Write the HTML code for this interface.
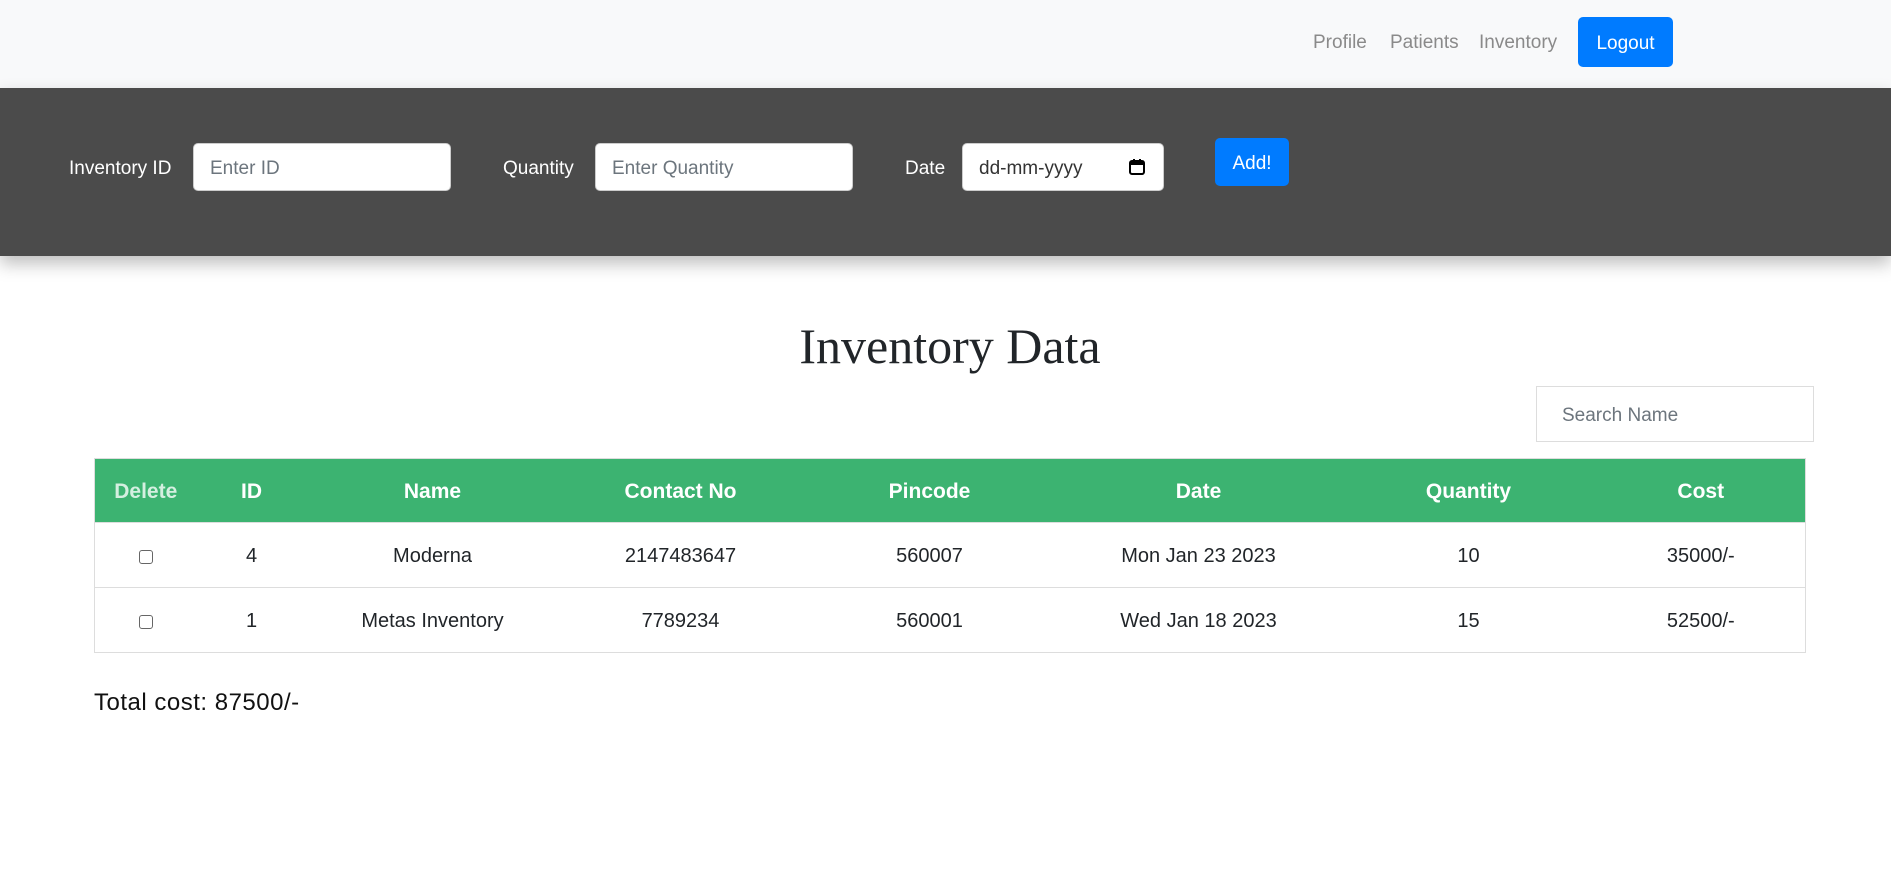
<!DOCTYPE html>
<html><head><meta charset="utf-8"><style>
*{box-sizing:border-box;margin:0;padding:0}
body{width:1891px;height:876px;background:#fff;font-family:"Liberation Sans",sans-serif;position:relative;overflow:hidden;color:#212529}
.a{position:absolute}
.nav{left:0;top:0;width:1891px;height:88px;background:#f8f9fa}
.nl{top:31px;font-size:19px;color:#8a8a8a;line-height:24px}
.btn{background:#007bff;color:#fff;border-radius:5px;font-size:19px;display:flex;align-items:center;justify-content:center;padding-top:3px}
.band{left:0;top:88px;width:1891px;height:168px;background:#4b4b4b;box-shadow:0 8px 16px rgba(0,0,0,.25)}
.lbl{color:#fff;font-size:19px;line-height:24px;top:157px}
.inp{top:143px;height:48px;background:#fff;border:1px solid #ccc;border-radius:5px;font-size:19px;color:#6c757d;padding-left:16px;line-height:50px}
h1{position:absolute;left:0;width:1900px;text-align:center;top:318px;font-family:"Liberation Serif",serif;font-weight:normal;font-size:50px;line-height:56px;color:#212529}
table{position:absolute;left:94px;top:458px;width:1712px;border-collapse:collapse;font-size:20px}
th{background:#3cb371;color:#fff;height:64px;font-weight:bold;text-align:center;border-top:1px solid #ddd;font-size:21px;padding-top:3px}
td{height:65px;text-align:center;border-top:1px solid #ddd;color:#212529;padding-top:3px}
table{border:1px solid #ddd}
.cb{display:inline-block;width:14px;height:14px;border:1px solid #666;border-radius:3px;vertical-align:middle}
</style></head><body>
<div class="a nav"></div>
<div class="a nl" style="left:1313px">Profile</div>
<div class="a nl" style="left:1390px">Patients</div>
<div class="a nl" style="left:1479px">Inventory</div>
<div class="a btn" style="left:1578px;top:17px;width:95px;height:50px">Logout</div>
<div class="a band"></div>
<div class="a lbl" style="left:69px">Inventory ID</div>
<div class="a inp" style="left:193px;width:258px">Enter ID</div>
<div class="a lbl" style="left:503px">Quantity</div>
<div class="a inp" style="left:595px;width:258px">Enter Quantity</div>
<div class="a lbl" style="left:905px">Date</div>
<div class="a inp" style="left:962px;width:202px;color:#333">dd-mm-yyyy
<svg class="a" style="left:165px;top:14px" width="18" height="18" viewBox="0 0 18 18"><rect x="2" y="3" width="14" height="13" rx="2" fill="none" stroke="#000" stroke-width="2"/><rect x="2" y="3" width="14" height="4" fill="#000"/><rect x="5" y="1" width="2" height="4" fill="#000"/><rect x="11" y="1" width="2" height="4" fill="#000"/></svg></div>
<div class="a btn" style="left:1215px;top:138px;width:74px;height:48px">Add!</div>
<h1>Inventory Data</h1>
<div class="a" style="left:1536px;top:386px;width:278px;height:56px;border:1px solid #ddd;font-size:19px;color:#6c757d;padding-left:25px;line-height:58px">Search Name</div>
<table>
<colgroup><col style="width:102px"><col style="width:110px"><col style="width:252px"><col style="width:244px"><col style="width:254px"><col style="width:284px"><col style="width:256px"><col></colgroup>
<tr><th style="color:#d4efe0">Delete</th><th>ID</th><th>Name</th><th>Contact No</th><th>Pincode</th><th>Date</th><th>Quantity</th><th>Cost</th></tr>
<tr><td><span class="cb"></span></td><td>4</td><td>Moderna</td><td>2147483647</td><td>560007</td><td>Mon Jan 23 2023</td><td>10</td><td>35000/-</td></tr>
<tr><td><span class="cb"></span></td><td>1</td><td>Metas Inventory</td><td>7789234</td><td>560001</td><td>Wed Jan 18 2023</td><td>15</td><td>52500/-</td></tr>
</table>
<div class="a" style="left:94px;top:688px;font-size:24px;line-height:30px;color:#111;letter-spacing:0.5px">Total cost: 87500/-</div>
</body></html>
